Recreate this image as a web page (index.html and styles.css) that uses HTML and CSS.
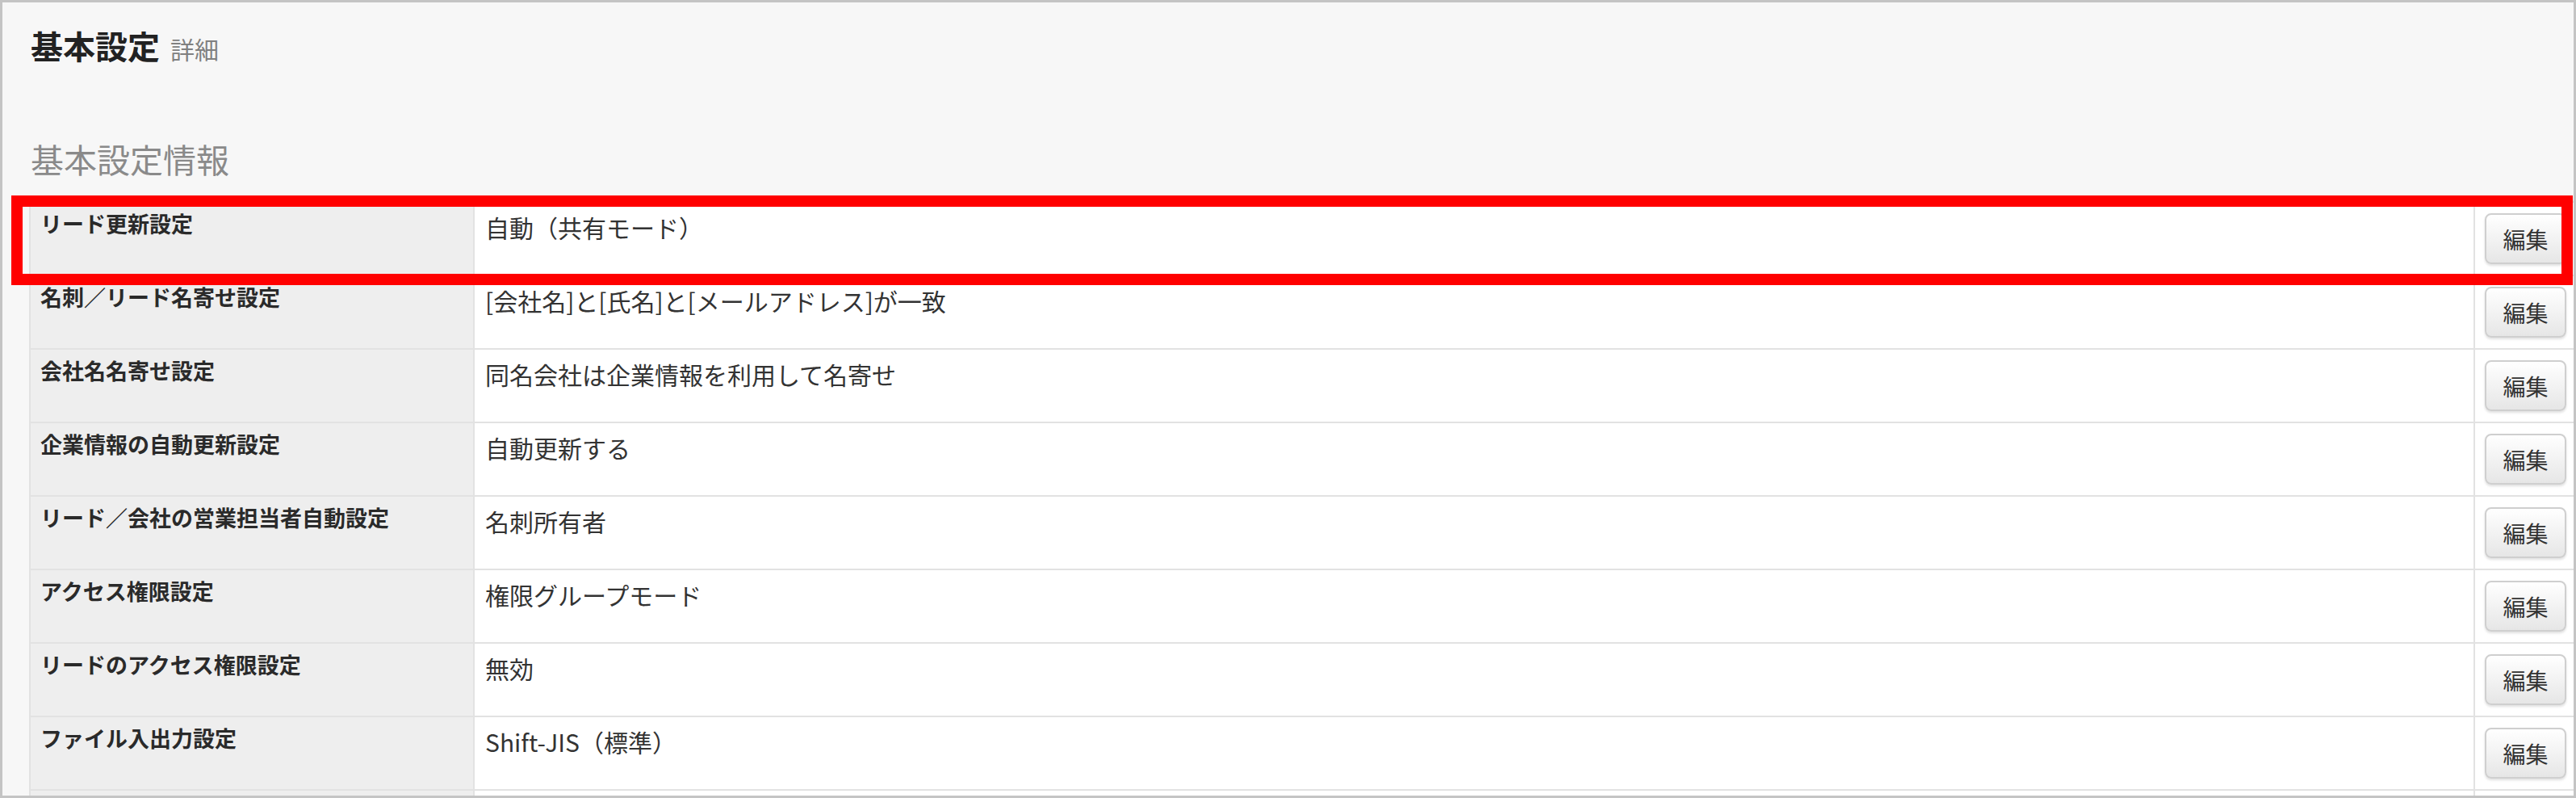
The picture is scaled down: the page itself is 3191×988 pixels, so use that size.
FILE: index.html
```html
<!DOCTYPE html>
<html lang="ja">
<head>
<meta charset="utf-8">
<title>基本設定 詳細</title>
<link rel="stylesheet" href="styles.css">
</head>
<body>
<div class="frame">
  <h1 class="page-title">基本設定<span class="page-sub">詳細</span></h1>
  <h2 class="section-title">基本設定情報</h2>
  <table class="settings">
    <colgroup>
      <col class="col-label">
      <col class="col-value">
      <col class="col-action">
    </colgroup>
    <tbody>
      <tr><th>リード更新設定</th><td>自動（共有モード）</td><td class="action"><button class="btn">編集</button></td></tr>
      <tr><th>名刺／リード名寄せ設定</th><td>[会社名]と[氏名]と[メールアドレス]が一致</td><td class="action"><button class="btn">編集</button></td></tr>
      <tr><th>会社名名寄せ設定</th><td>同名会社は企業情報を利用して名寄せ</td><td class="action"><button class="btn">編集</button></td></tr>
      <tr><th>企業情報の自動更新設定</th><td>自動更新する</td><td class="action"><button class="btn">編集</button></td></tr>
      <tr><th>リード／会社の営業担当者自動設定</th><td>名刺所有者</td><td class="action"><button class="btn">編集</button></td></tr>
      <tr><th>アクセス権限設定</th><td>権限グループモード</td><td class="action"><button class="btn">編集</button></td></tr>
      <tr><th>リードのアクセス権限設定</th><td>無効</td><td class="action"><button class="btn">編集</button></td></tr>
      <tr><th>ファイル入出力設定</th><td>Shift-JIS（標準）</td><td class="action"><button class="btn">編集</button></td></tr>
      <tr class="row-empty"><th></th><td></td><td class="action"></td></tr>
    </tbody>
  </table>
  <div class="highlight"></div>
</div>
</body>
</html>
```

FILE: styles.css
```css
html, body {
  margin: 0;
  padding: 0;
  background: #ffffff;
}

body {
  font-family: "Noto Sans CJK JP", "Noto Sans", "Liberation Sans", sans-serif;
  color: #333333;
}

.frame {
  position: relative;
  box-sizing: border-box;
  width: 3191px;
  height: 988px;
  border: 3px solid #c4c4c4;
  background: #f7f7f7;
  overflow: hidden;
}

.page-title {
  margin: 0;
  padding: 29px 0 0 35px;
  height: 48px;
  font-size: 40px;
  line-height: 48px;
  font-weight: 700;
  color: #222222;
}

.page-sub {
  margin-left: 13px;
  font-size: 30px;
  line-height: 1;
  font-weight: 400;
  color: #808080;
}

.section-title {
  margin: 0;
  padding: 92px 0 0 35px;
  height: 48px;
  font-size: 41px;
  line-height: 48px;
  font-weight: 400;
  color: #8a8a8a;
}

.settings {
  margin: 29px 0 0 33px;
  width: calc(100% - 33px);
  table-layout: fixed;
  border-collapse: separate;
  border-spacing: 0;
  border-left: 2px solid #e2e2e2;
  border-top: 2px solid #e2e2e2;
  line-height: 38px;
}

.col-label { width: 550px; }
.col-action { width: 122px; }

.settings th,
.settings td {
  vertical-align: top;
  text-align: left;
  border-right: 2px solid #e2e2e2;
  border-bottom: 2px solid #e2e2e2;
  white-space: nowrap;
}

.settings th {
  padding: 7px 13px 0 12px;
  background: #eeeeee;
  font-size: 27px;
  font-weight: 700;
  color: #2a2a2a;
}

.settings td {
  padding: 11px 13px 0 13px;
  background: #ffffff;
  font-size: 30px;
  font-weight: 400;
  color: #333333;
}

.settings td.action {
  padding: 13px 0 13px 12px;
  border-right: none;
}

.row-empty th,
.row-empty td {
  height: 89px;
}

.btn {
  display: block;
  box-sizing: border-box;
  width: 101px;
  height: 63px;
  padding: 0;
  border: 2px solid #cfcfcf;
  border-radius: 8px;
  background: linear-gradient(#ffffff, #e6e6e6);
  box-shadow: 0 2px 3px rgba(0, 0, 0, 0.12);
  font-family: inherit;
  font-size: 28px;
  line-height: 1;
  color: #333333;
}

.highlight {
  position: absolute;
  left: 11px;
  top: 239px;
  width: 3173px;
  height: 111px;
  box-sizing: border-box;
  border: 14px solid #ff0000;
  pointer-events: none;
}
```
